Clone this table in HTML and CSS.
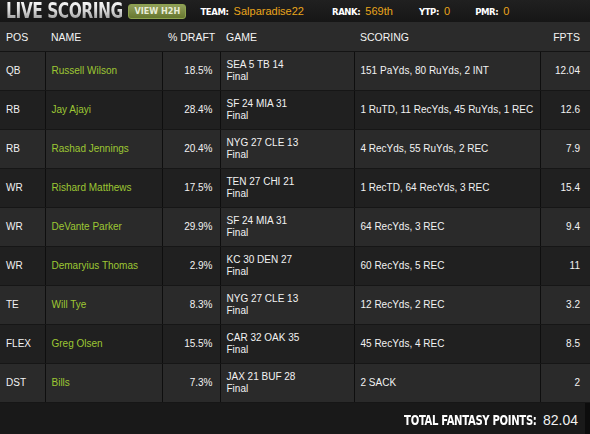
FILE: index.html
```html
<!DOCTYPE html>
<html lang="en">
<head>
    <meta charset="UTF-8">
    <title>Live Scoring</title>
    <link rel="stylesheet" href="styles.css">
</head>
<body>
    <div class="topbar">
        <h1 class="title">LIVE SCORING</h1>
        <button class="h2h">VIEW H2H</button>
        <span class="label">TEAM:</span><span class="value team">Salparadise22</span>
        <span class="label">RANK:</span><span class="value rank">569th</span>
        <span class="label">YTP:</span><span class="value ytp">0</span>
        <span class="label">PMR:</span><span class="value">0</span>
    </div>

    <div class="board">
        <table>
            <thead>
                <tr>
                    <th class="c-pos">POS</th>
                    <th class="c-name">NAME</th>
                    <th class="c-draft">% DRAFT</th>
                    <th class="c-game">GAME</th>
                    <th class="c-score">SCORING</th>
                    <th class="c-pts">FPTS</th>
                </tr>
            </thead>
            <tbody id="lineup"></tbody>
        </table>
        <div class="total">
            <span class="total-label">TOTAL FANTASY POINTS:</span>
            <span class="total-value">82.04</span>
        </div>
    </div>

    <script>
        let lineup = [
            {pos: "QB", nama: "Russell Wilson", draft: "18.5%", game: "SEA 5 TB 14", scoring: "151 PaYds, 80 RuYds, 2 INT", pts: "12.04"},
            {pos: "RB", nama: "Jay Ajayi", draft: "28.4%", game: "SF 24 MIA 31", scoring: "1 RuTD, 11 RecYds, 45 RuYds, 1 REC", pts: "12.6"},
            {pos: "RB", nama: "Rashad Jennings", draft: "20.4%", game: "NYG 27 CLE 13", scoring: "4 RecYds, 55 RuYds, 2 REC", pts: "7.9"},
            {pos: "WR", nama: "Rishard Matthews", draft: "17.5%", game: "TEN 27 CHI 21", scoring: "1 RecTD, 64 RecYds, 3 REC", pts: "15.4"},
            {pos: "WR", nama: "DeVante Parker", draft: "29.9%", game: "SF 24 MIA 31", scoring: "64 RecYds, 3 REC", pts: "9.4"},
            {pos: "WR", nama: "Demaryius Thomas", draft: "2.9%", game: "KC 30 DEN 27", scoring: "60 RecYds, 5 REC", pts: "11"},
            {pos: "TE", nama: "Will Tye", draft: "8.3%", game: "NYG 27 CLE 13", scoring: "12 RecYds, 2 REC", pts: "3.2"},
            {pos: "FLEX", nama: "Greg Olsen", draft: "15.5%", game: "CAR 32 OAK 35", scoring: "45 RecYds, 4 REC", pts: "8.5"},
            {pos: "DST", nama: "Bills", draft: "7.3%", game: "JAX 21 BUF 28", scoring: "2 SACK", pts: "2"}
        ];

        function tampilkanLineup() {
            let list = document.getElementById("lineup");
            list.innerHTML = "";
            lineup.forEach((p) => {
                let row = document.createElement("tr");
                row.innerHTML = `
                    <td class="c-pos">${p.pos}</td>
                    <td class="c-name player">${p.nama}</td>
                    <td class="c-draft">${p.draft}</td>
                    <td class="c-game">${p.game}<br>Final</td>
                    <td class="c-score">${p.scoring}</td>
                    <td class="c-pts">${p.pts}</td>
                `;
                list.appendChild(row);
            });
        }

        tampilkanLineup();
    </script>
</body>
</html>
```

FILE: styles.css
```css
body {
    margin: 0;
    background: #0c0c0c;
    font-family: "Liberation Sans", Arial, sans-serif;
    color: #f2f2f2;
}
.topbar {
    height: 22px;
    background: linear-gradient(#202020, #161616);
    display: flex;
    align-items: center;
    padding-left: 6px;
}
.title {
    margin: 0 -26px 0 0;
    font-family: "DejaVu Sans Condensed", "DejaVu Sans", sans-serif;
    font-weight: bold;
    font-size: 21px;
    letter-spacing: -0.6px;
    line-height: 22px;
    transform: scaleX(0.82);
    transform-origin: left center;
    background: linear-gradient(#ffffff, #d6d6d6 50%, #8a8a8a);
    -webkit-background-clip: text;
    background-clip: text;
    color: transparent;
}
.h2h {
    margin-left: 6px;
    height: 15px;
    width: 58px;
    padding: 0;
    border: 1px solid #8da34e;
    border-radius: 3px;
    background: linear-gradient(#909f5a, #67772f);
    color: #e8ecd6;
    font-family: "DejaVu Sans Condensed", "DejaVu Sans", sans-serif;
    font-weight: bold;
    font-size: 9px;
    line-height: 13px;
}
.label {
    margin-left: 14px;
    font-family: "DejaVu Sans Condensed", "DejaVu Sans", sans-serif;
    font-weight: bold;
    font-size: 9.5px;
    letter-spacing: -0.4px;
    color: #ffffff;
}
.value {
    margin-left: 5px;
    font-size: 11px;
    color: #e9a51b;
}
.team { margin-right: 14px; }
.rank { margin-right: 12px; }
.ytp { margin-right: 11px; }
.board {
    width: 585px;
}
table {
    width: 585px;
    border-collapse: collapse;
    table-layout: fixed;
    font-size: 10px;
}
th {
    height: 29px;
    padding: 0 6px;
    background: #2b2b2b;
    font-weight: normal;
    font-size: 10.5px;
    text-align: left;
    white-space: nowrap;
    color: #f4f4f4;
    border-bottom: 1px solid #141414;
}
td {
    height: 38px;
    padding: 0 6px;
    line-height: 12px;
    white-space: nowrap;
    border-left: 1px solid #0e0e0e;
    border-bottom: 1px solid #161616;
}
td:first-child {
    border-left: none;
}
tbody tr:nth-child(odd) td {
    background: #2a2a2a;
}
tbody tr:nth-child(even) td {
    background: #202020;
}
.c-pos { width: 33px; }
.c-name { width: 105px; }
.c-draft { width: 45px; text-align: right; padding-right: 7px; }
.c-game { width: 122px; }
.c-score { width: 174px; }
.c-pts { width: 34px; text-align: right; padding-right: 10px; }
th.c-draft, th.c-pts { text-align: right; }
.player {
    color: #9dc733;
}
.total {
    height: 34px;
    background: #191919;
    display: flex;
    align-items: center;
    justify-content: flex-end;
    padding-right: 7px;
}
.total-label {
    font-family: "DejaVu Sans Condensed", "DejaVu Sans", sans-serif;
    font-weight: bold;
    font-size: 14px;
    letter-spacing: -0.4px;
    transform: scaleX(0.8);
    transform-origin: right center;
    color: #ffffff;
}
.total-value {
    margin-left: 6px;
    font-size: 14px;
    color: #f2f2f2;
}
```
